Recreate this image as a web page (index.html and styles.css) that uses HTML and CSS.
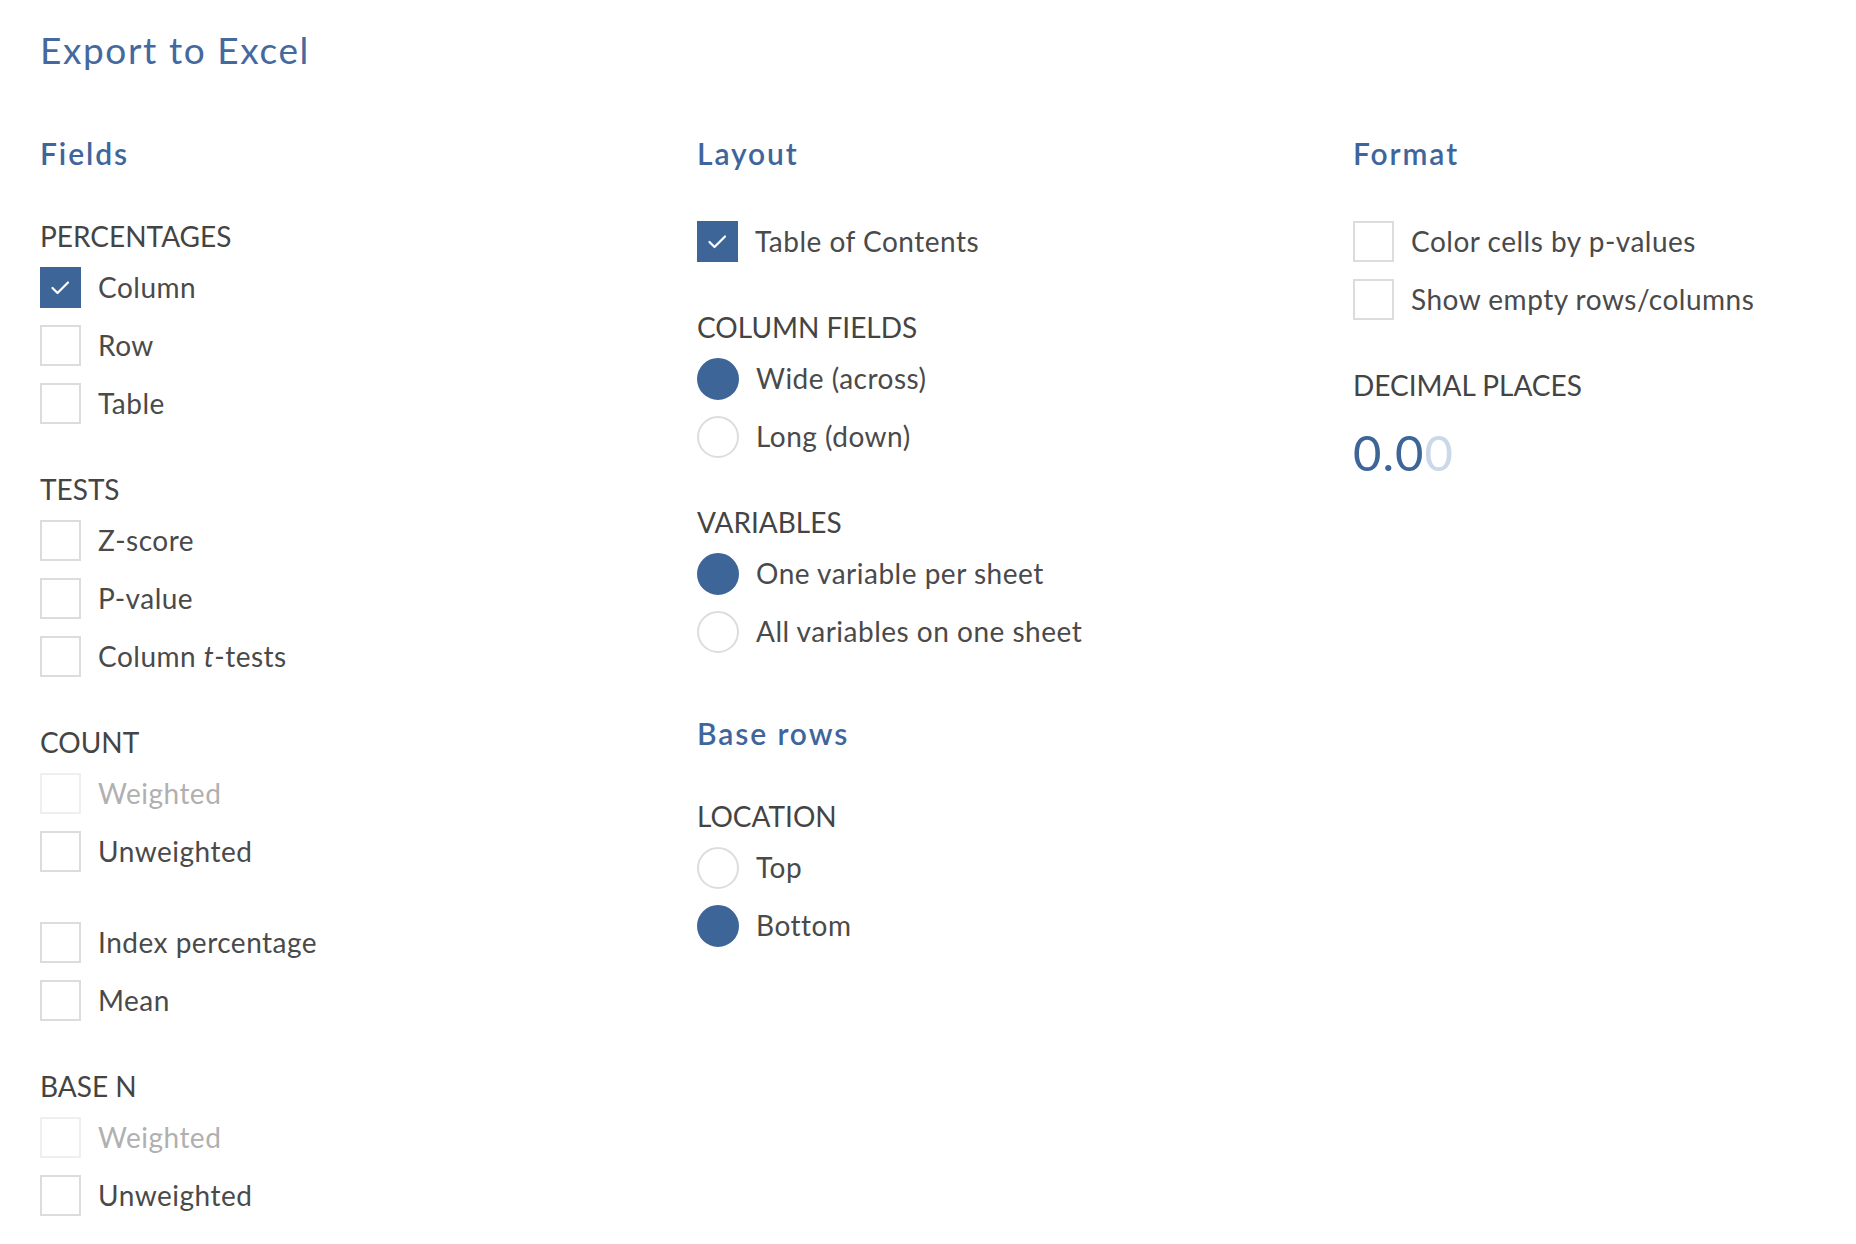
FILE: index.html
```html
<!DOCTYPE html>
<html lang="en">
<head>
<meta charset="utf-8">
<title>Export to Excel</title>
<link rel="stylesheet" href="styles.css">
</head>
<body>
<main class="page">
  <h1 class="title">Export to Excel</h1>
  <div class="columns">
    <section class="col">
      <h2 class="heading">Fields</h2>
      <div class="group">
        <div class="group-label">PERCENTAGES</div>
        <div class="items">
          <label class="opt"><span class="box checked"><svg viewBox="0 0 41 41"><polyline points="12.5,21 17.5,26 28,15.5"/></svg></span><span class="txt">Column</span></label>
          <label class="opt"><span class="box"></span><span class="txt">Row</span></label>
          <label class="opt"><span class="box"></span><span class="txt">Table</span></label>
        </div>
      </div>
      <div class="group">
        <div class="group-label">TESTS</div>
        <div class="items">
          <label class="opt"><span class="box"></span><span class="txt">Z-score</span></label>
          <label class="opt"><span class="box"></span><span class="txt">P-value</span></label>
          <label class="opt"><span class="box"></span><span class="txt">Column <i>t</i>-tests</span></label>
        </div>
      </div>
      <div class="group">
        <div class="group-label">COUNT</div>
        <div class="items">
          <label class="opt disabled"><span class="box"></span><span class="txt">Weighted</span></label>
          <label class="opt"><span class="box"></span><span class="txt">Unweighted</span></label>
        </div>
      </div>
      <div class="group">
        <div class="items">
          <label class="opt"><span class="box"></span><span class="txt">Index percentage</span></label>
          <label class="opt"><span class="box"></span><span class="txt">Mean</span></label>
        </div>
      </div>
      <div class="group">
        <div class="group-label">BASE N</div>
        <div class="items">
          <label class="opt disabled"><span class="box"></span><span class="txt">Weighted</span></label>
          <label class="opt"><span class="box"></span><span class="txt">Unweighted</span></label>
        </div>
      </div>
    </section>

    <section class="col">
      <h2 class="heading">Layout</h2>
      <div class="group">
        <div class="items">
          <label class="opt"><span class="box checked"><svg viewBox="0 0 41 41"><polyline points="12.5,21 17.5,26 28,15.5"/></svg></span><span class="txt">Table of Contents</span></label>
        </div>
      </div>
      <div class="group">
        <div class="group-label">COLUMN FIELDS</div>
        <div class="items">
          <label class="opt"><span class="radio on"></span><span class="txt">Wide (across)</span></label>
          <label class="opt"><span class="radio"></span><span class="txt">Long (down)</span></label>
        </div>
      </div>
      <div class="group">
        <div class="group-label">VARIABLES</div>
        <div class="items">
          <label class="opt"><span class="radio on"></span><span class="txt">One variable per sheet</span></label>
          <label class="opt"><span class="radio"></span><span class="txt">All variables on one sheet</span></label>
        </div>
      </div>
      <h2 class="heading heading-sub">Base rows</h2>
      <div class="group">
        <div class="group-label">LOCATION</div>
        <div class="items">
          <label class="opt"><span class="radio"></span><span class="txt">Top</span></label>
          <label class="opt"><span class="radio on"></span><span class="txt">Bottom</span></label>
        </div>
      </div>
    </section>

    <section class="col">
      <h2 class="heading">Format</h2>
      <div class="group">
        <div class="items">
          <label class="opt"><span class="box"></span><span class="txt">Color cells by p-values</span></label>
          <label class="opt"><span class="box"></span><span class="txt">Show empty rows/columns</span></label>
        </div>
      </div>
      <div class="group">
        <div class="group-label">DECIMAL PLACES</div>
        <div class="decimals">0.0<span class="ghost">0</span></div>
      </div>
    </section>
  </div>
</main>
</body>
</html>
```

FILE: styles.css
```css
* { box-sizing: border-box; }

html, body {
  margin: 0;
  padding: 0;
  background: #ffffff;
}

body {
  font-family: Lato, "Open Sans", "Liberation Sans", sans-serif;
  color: #4a4a4a;
}

.page {
  padding: 28px 0 0 40px;
}

.title {
  margin: 0;
  font-size: 37px;
  line-height: 44px;
  font-weight: 400;
  letter-spacing: 1.6px;
  color: #44699e;
}

.columns {
  display: grid;
  grid-template-columns: 657px 656px 1fr;
  margin-top: 63px;
}

.col {
  display: flex;
  flex-direction: column;
}

.heading {
  margin: 0;
  font-size: 30px;
  line-height: 36px;
  font-weight: 600;
  letter-spacing: 1.9px;
  color: #3f669c;
}

.heading-sub {
  margin-top: 63px;
}

.group {
  margin-top: 50px;
  display: flex;
  flex-direction: column;
}

.group-label {
  font-size: 28px;
  line-height: 30px;
  color: #444444;
  margin-bottom: 16px;
}

.items {
  display: flex;
  flex-direction: column;
  gap: 17px;
}

.opt {
  display: flex;
  align-items: center;
  gap: 17px;
  height: 41px;
  font-size: 28px;
  line-height: 41px;
  letter-spacing: 0.5px;
  color: #4a4a4a;
}

.box {
  width: 41px;
  height: 41px;
  flex: none;
  border: 2px solid #dcdcdc;
  background: #fff;
  display: flex;
}

.box.checked {
  background: #3e6598;
  border-color: #3e6598;
}

.box svg {
  width: 41px;
  height: 41px;
  margin: -2px;
}

.box svg polyline {
  fill: none;
  stroke: #ffffff;
  stroke-width: 2.2;
  stroke-linecap: round;
  stroke-linejoin: round;
}

.radio {
  width: 42px;
  height: 42px;
  flex: none;
  border-radius: 50%;
  border: 2px solid #dddddd;
  background: #fff;
}

.radio.on {
  background: #3e6598;
  border-color: #3e6598;
}

.opt.disabled .box {
  border-color: #efefef;
}

.opt.disabled .txt {
  color: #b0b0b0;
}

.decimals {
  margin-top: 12px;
  font-size: 49px;
  line-height: 48px;
  letter-spacing: 1px;
  color: #3e6598;
}

.decimals .ghost {
  color: #cbd8ea;
}
```
